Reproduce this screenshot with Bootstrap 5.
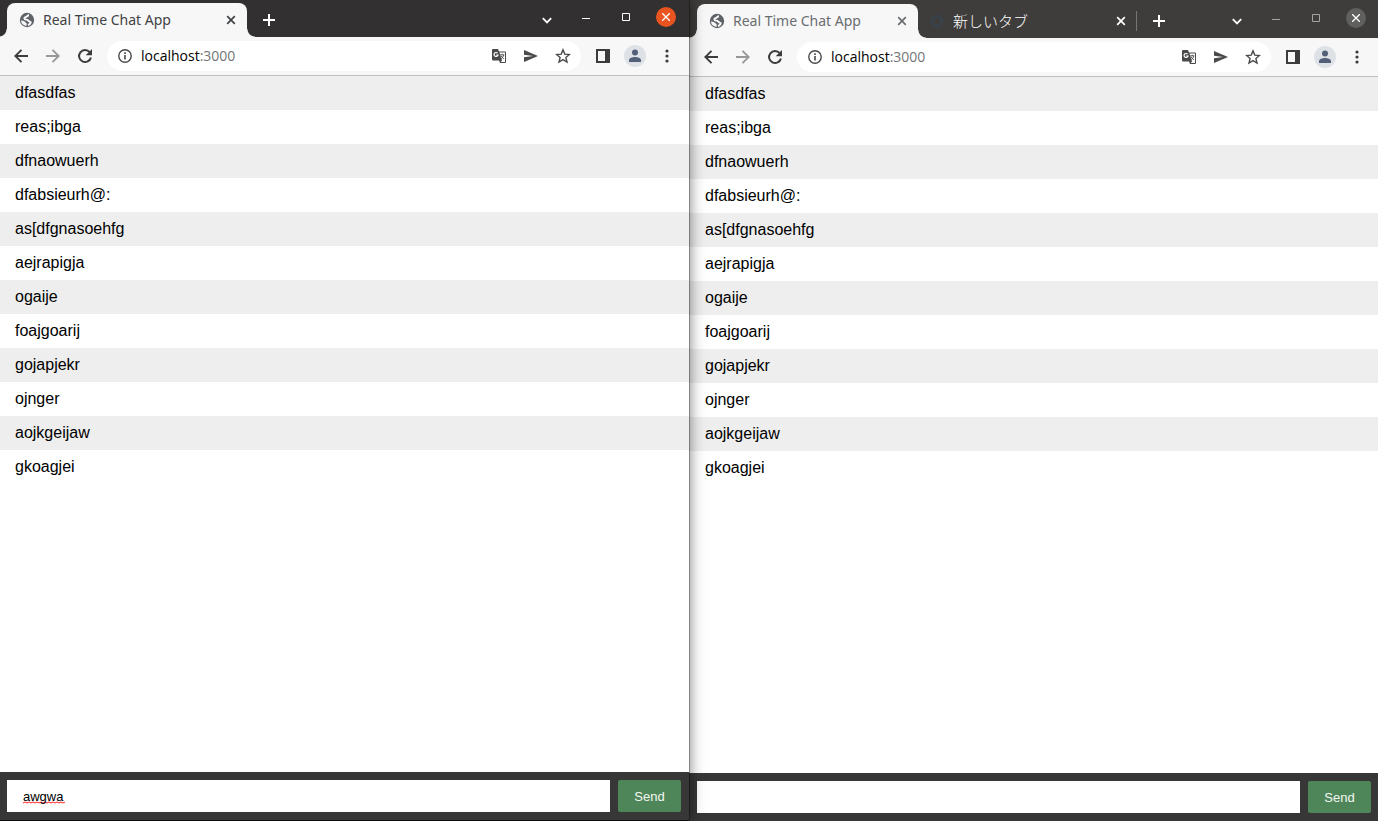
<!DOCTYPE html>
<html lang="en">
<head>
<meta charset="utf-8">
<meta name="viewport" content="width=device-width, initial-scale=1">
<title>Real Time Chat App</title>
<link href="https://cdn.jsdelivr.net/npm/bootstrap@5.3.0/dist/css/bootstrap.min.css" rel="stylesheet">
<style>
body { font-family: "Liberation Sans", Arial, sans-serif; font-size: 16px; color: #000; }
.win { flex: 1 1 0; min-width: 0; background: #fff; --start: 0px; --end: 0px; --strip: #323030; --ctl: #fff; --tabtext: #3f4245; }
.win-front { --end: 1px; z-index: 2; border-bottom: 1px solid #0c0c0c; box-shadow: 0 0 14px rgba(0,0,0,.55); }
.win-front::after { content: ""; position: absolute; top: 0; right: -1px; bottom: 0; width: 1px; background: rgba(0,0,0,.3); }
.win-back { --start: 1px; --strip: #3e3d3b; --ctl: #a5a4a2; --tabtext: #6a6d70; }
.ui { font-family: "Noto Sans", "Noto Sans CJK JP", sans-serif; }
.win button { border: 0; background: none; padding: 0; display: flex; align-items: center; justify-content: center; flex: none; color: inherit; }
.win svg { display: block; flex: none; }
.strip { background: var(--strip); padding: 3px calc(2px + var(--end)) 0 calc(7px + var(--start)); color: #fff; }
.win-back .strip { padding-top: 4px; }
.page-tab { height: 34px; width: 240px; padding-left: 12px; font-size: 14px; line-height: 20px; }
.page-tab.on { background: #f7f7f7; color: var(--tabtext); border-radius: 8px 8px 0 0; }
.page-tab.on::before, .page-tab.on::after { content: ""; position: absolute; bottom: 0; width: 8px; height: 8px; }
.page-tab.on::before { left: -8px; background: radial-gradient(circle at 0 0, transparent 7px, #f7f7f7 8px); }
.page-tab.on::after { right: -8px; background: radial-gradient(circle at 100% 0, transparent 7px, #f7f7f7 8px); }
.win-back .page-tab { width: 221px; }
.win-back .page-tab.off { width: 219px; padding-left: 11px; font-size: 15px; font-family: "Noto Sans CJK JP", sans-serif; font-weight: 300; color: #fff; }
.page-tab.off::after { content: ""; position: absolute; right: 0; top: 7px; width: 1px; height: 20px; background: #777674; }
.tool { width: 32px; height: 34px; }
.newtab { margin-left: 6px; }
.ctl { width: 40px; height: 28px; }
.ctls { color: var(--ctl); margin-left: 3px; }
.round { width: 20px; height: 20px; border-radius: 50%; background: #e95420; color: #fff; }
.win-back .round { background: #60605f; }
.bar { background: #f7f7f7; height: 39px; border-bottom: 1px solid #bfc0c0; padding: 0 calc(5px + var(--end)) 0 calc(5px + var(--start)); color: #3c3c3c; }
.omni { height: 30px; border-radius: 15px; background: #fff; margin: 0 6px; padding: 0 2px; color: #4a4a4a; }
.address { font-family: "Open Sans", sans-serif; font-size: 14px; line-height: 20px; color: #000; white-space: nowrap; }
.address span { color: #757575; }
.who { width: 22px; height: 22px; border-radius: 50%; background: #dee1e6; }
.messages li { padding: 5px 15px 5px calc(15px + var(--start)); line-height: 24px; }
.messages li:nth-child(odd) { background: #eee; }
.composer { background: #373737; padding: 8px calc(7px + var(--end)) 8px calc(7px + var(--start)); gap: 8px; font-size: 13px; }
.composer input { height: 32px; border: 0; border-radius: 0; padding: 0 16px; min-width: 0; background: #fff; color: #000; outline: 0; }
/* spelling squiggle under the draft word */
.composer .draft { background: #fff url("data:image/svg+xml,%3Csvg xmlns='http://www.w3.org/2000/svg' width='42' height='3'%3E%3Cpath d='M0 2l2-1 2 1 2-1 2 1 2-1 2 1 2-1 2 1 2-1 2 1 2-1 2 1 2-1 2 1 2-1 2 1 2-1 2 1 2-1 2 1 2-1' fill='none' stroke='%23f22' stroke-width='1'/%3E%3C/svg%3E") 16px 21px no-repeat; }
.win .composer .send { width: 63px; height: 32px; border-radius: 2px; padding-top: 1px; background: #4f8659; color: #f2f7f3; }
</style>
</head>
<body>
<svg class="d-none" aria-hidden="true">
  <symbol id="globe" viewBox="0 0 16 16"><circle cx="8" cy="8" r="7.200" fill="#5f6368"/><path d="M10 3.300C8 3.300 8.500 5 6.300 5.200 4.800 5.600 5.200 7.700 7 7.600 9.500 7.300 9 9.600 11 9.700 12.500 9.700 11.500 12 9 13" fill="none" stroke="#f7f7f7" stroke-width="1.900"/><path d="M2 8.300L5.200 9.200 7.600 11.200V13.900A6 6 0 0 1 2 8.300Z" fill="#f7f7f7"/></symbol>
  <symbol id="x" viewBox="0 0 10 10"><path d="M1.200 1.200l7.600 7.600M8.800 1.200L1.200 8.800" stroke="currentColor" stroke-width="1.700"/></symbol>
  <symbol id="plus" viewBox="0 0 12 12"><path d="M6 0v12M0 6h12" stroke="currentColor" stroke-width="2"/></symbol>
  <symbol id="chev" viewBox="0 0 10 7"><path d="M.8 1.200L5 5.400l4.200-4.200" fill="none" stroke="#fff" stroke-width="1.800"/></symbol>
  <symbol id="back" viewBox="0 0 14 14"><path d="M14 7H1.600M7.500.8L1.300 7l6.200 6.200" fill="none" stroke="currentColor" stroke-width="1.900"/></symbol>
  <symbol id="reload" viewBox="0 0 16 16"><path d="M12.700 4.200A6 6 0 1 0 13.900 9.400" fill="none" stroke="currentColor" stroke-width="2"/><path d="M15 1v6.300H8.700Z" fill="currentColor"/></symbol>
  <symbol id="info" viewBox="0 0 14 14"><circle cx="7" cy="7" r="6.200" fill="none" stroke="currentColor" stroke-width="1.400"/><path d="M7 6v4.600M7 3.300v1.600" stroke="currentColor" stroke-width="1.600"/></symbol>
  <symbol id="translate" viewBox="0 0 14 14"><path d="M1 0h5l1 2.500h6a1 1 0 0 1 1 1V13a1 1 0 0 1-1 1H8l-1-2.500H1a1 1 0 0 1-1-1V1a1 1 0 0 1 1-1Z" fill="currentColor"/><path d="M7.500 3.500H13V13H8.700L10 11.500Z" fill="#fff"/><path d="M5.600 4.200A2 2 0 1 0 6 6H4.200" fill="none" stroke="#fff" stroke-width="1.200"/><path d="M8.200 5.800h4.200M10.300 4.800v1M11.700 6c-.3 1.700-1.200 2.800-2.400 3.700M9 6.700c.6 1.300 1.500 2.300 2.900 3.200" fill="none" stroke="currentColor" stroke-width=".9"/></symbol>
  <symbol id="plane" viewBox="0 0 14 12"><path d="M0 0l14 6L0 12V7.300L9 6 0 4.700Z" fill="currentColor"/></symbol>
  <symbol id="star" viewBox="0 0 16 16"><path d="M8 1.900l1.800 4.200 4.600.4-3.500 3 1.100 4.500-4-2.400L4 14l1.100-4.500-3.500-3 4.600-.4Z" fill="none" stroke="currentColor" stroke-width="1.400"/></symbol>
  <symbol id="side" viewBox="0 0 14 14"><path d="M0 0h14v14H0ZM2 2v10h7V2Z" fill="currentColor" fill-rule="evenodd"/></symbol>
  <symbol id="person" viewBox="0 0 12 14"><circle cx="6" cy="3.500" r="3" fill="#535f79"/><path d="M0 13v-1.700C0 9 3.500 8 6 8s6 1 6 3.300V13Z" fill="#535f79"/></symbol>
  <symbol id="dots" viewBox="0 0 4 14"><g fill="currentColor"><circle cx="2" cy="2" r="1.600"/><circle cx="2" cy="7" r="1.600"/><circle cx="2" cy="12" r="1.600"/></g></symbol>
</svg>

<div class="d-flex vh-100 overflow-hidden">
  <section class="win win-front position-relative d-flex flex-column">
    <header class="ui">
      <div class="strip d-flex align-items-start">
        <div class="page-tab on position-relative d-flex align-items-center">
          <svg width="16" height="16"><use href="#globe"/></svg><span class="ms-2 me-auto">Real Time Chat App</span>
          <button class="tool" aria-label="Close tab"><svg width="10" height="10"><use href="#x"/></svg></button>
        </div>
        <button class="tool newtab me-auto" aria-label="New tab"><svg width="12" height="12"><use href="#plus"/></svg></button>
        <button class="tool" aria-label="Search tabs"><svg width="10" height="7"><use href="#chev"/></svg></button>
        <div class="ctls d-flex">
          <button class="ctl" aria-label="Minimize"><svg width="8" height="8"><path d="M0 5.500h8" stroke="currentColor"/></svg></button>
          <button class="ctl" aria-label="Maximize"><svg width="8" height="8"><path d="M.5.5h7v7h-7Z" fill="none" stroke="currentColor"/></svg></button>
          <button class="ctl" aria-label="Close"><span class="round d-flex align-items-center justify-content-center"><svg width="8" height="8"><path d="M0 0l8 8M8 0L0 8" stroke="currentColor" stroke-width="1.300"/></svg></span></button>
        </div>
      </div>
      <div class="bar d-flex align-items-center">
        <button class="tool" aria-label="Back"><svg width="14" height="14"><use href="#back"/></svg></button>
        <button class="tool opacity-50" aria-label="Forward"><svg width="14" height="14" viewBox="0 0 14 14"><path d="M0 7h12.400M6.500.8L12.700 7l-6.200 6.200" fill="none" stroke="currentColor" stroke-width="1.900"/></svg></button>
        <button class="tool" aria-label="Reload"><svg width="16" height="16"><use href="#reload"/></svg></button>
        <div class="omni d-flex flex-fill align-items-center">
          <button class="tool" aria-label="Site information"><svg width="14" height="14"><use href="#info"/></svg></button>
          <div class="address me-auto">localhost<span>:3000</span></div>
          <button class="tool" aria-label="Translate"><svg width="14" height="14"><use href="#translate"/></svg></button>
          <button class="tool" aria-label="Share"><svg width="14" height="12"><use href="#plane"/></svg></button>
          <button class="tool" aria-label="Bookmark"><svg width="16" height="16"><use href="#star"/></svg></button>
        </div>
        <button class="tool" aria-label="Side panel"><svg width="14" height="14"><use href="#side"/></svg></button>
        <button class="tool" aria-label="Profile"><span class="who d-flex align-items-center justify-content-center"><svg width="12" height="14"><use href="#person"/></svg></span></button>
        <button class="tool" aria-label="Menu"><svg width="4" height="14"><use href="#dots"/></svg></button>
      </div>
    </header>
    <ul class="messages list-unstyled mb-0 flex-fill overflow-auto">
      <li>dfasdfas</li><li>reas;ibga</li><li>dfnaowuerh</li><li>dfabsieurh@:</li><li>as[dfgnasoehfg</li><li>aejrapigja</li><li>ogaije</li><li>foajgoarij</li><li>gojapjekr</li><li>ojnger</li><li>aojkgeijaw</li><li>gkoagjei</li>
    </ul>
    <form class="composer d-flex">
      <input class="draft flex-fill" type="text" value="awgwa" aria-label="Message" autocomplete="off">
      <button class="send" type="button">Send</button>
    </form>
  </section>

  <section class="win win-back position-relative d-flex flex-column">
    <header class="ui">
      <div class="strip d-flex align-items-start">
        <div class="page-tab on position-relative d-flex align-items-center">
          <svg width="16" height="16"><use href="#globe"/></svg><span class="ms-2 me-auto">Real Time Chat App</span>
          <button class="tool" aria-label="Close tab"><svg width="10" height="10"><use href="#x"/></svg></button>
        </div>
        <div class="page-tab off position-relative d-flex align-items-center">
          <svg width="16" height="16"><circle cx="8" cy="8" r="5" fill="none" stroke="#39414a" stroke-width="3"/></svg><span class="ms-2 me-auto" lang="ja">新しいタブ</span>
          <button class="tool" aria-label="Close tab"><svg width="10" height="10"><use href="#x"/></svg></button>
        </div>
        <button class="tool newtab me-auto" aria-label="New tab"><svg width="12" height="12"><use href="#plus"/></svg></button>
        <button class="tool" aria-label="Search tabs"><svg width="10" height="7"><use href="#chev"/></svg></button>
        <div class="ctls d-flex">
          <button class="ctl" aria-label="Minimize"><svg width="8" height="8"><path d="M0 5.500h8" stroke="currentColor"/></svg></button>
          <button class="ctl" aria-label="Maximize"><svg width="8" height="8"><path d="M.5.5h7v7h-7Z" fill="none" stroke="currentColor"/></svg></button>
          <button class="ctl" aria-label="Close"><span class="round d-flex align-items-center justify-content-center"><svg width="8" height="8"><path d="M0 0l8 8M8 0L0 8" stroke="currentColor" stroke-width="1.300"/></svg></span></button>
        </div>
      </div>
      <div class="bar d-flex align-items-center">
        <button class="tool" aria-label="Back"><svg width="14" height="14"><use href="#back"/></svg></button>
        <button class="tool opacity-50" aria-label="Forward"><svg width="14" height="14" viewBox="0 0 14 14"><path d="M0 7h12.400M6.500.8L12.700 7l-6.200 6.200" fill="none" stroke="currentColor" stroke-width="1.900"/></svg></button>
        <button class="tool" aria-label="Reload"><svg width="16" height="16"><use href="#reload"/></svg></button>
        <div class="omni d-flex flex-fill align-items-center">
          <button class="tool" aria-label="Site information"><svg width="14" height="14"><use href="#info"/></svg></button>
          <div class="address me-auto">localhost<span>:3000</span></div>
          <button class="tool" aria-label="Translate"><svg width="14" height="14"><use href="#translate"/></svg></button>
          <button class="tool" aria-label="Share"><svg width="14" height="12"><use href="#plane"/></svg></button>
          <button class="tool" aria-label="Bookmark"><svg width="16" height="16"><use href="#star"/></svg></button>
        </div>
        <button class="tool" aria-label="Side panel"><svg width="14" height="14"><use href="#side"/></svg></button>
        <button class="tool" aria-label="Profile"><span class="who d-flex align-items-center justify-content-center"><svg width="12" height="14"><use href="#person"/></svg></span></button>
        <button class="tool" aria-label="Menu"><svg width="4" height="14"><use href="#dots"/></svg></button>
      </div>
    </header>
    <ul class="messages list-unstyled mb-0 flex-fill overflow-auto">
      <li>dfasdfas</li><li>reas;ibga</li><li>dfnaowuerh</li><li>dfabsieurh@:</li><li>as[dfgnasoehfg</li><li>aejrapigja</li><li>ogaije</li><li>foajgoarij</li><li>gojapjekr</li><li>ojnger</li><li>aojkgeijaw</li><li>gkoagjei</li>
    </ul>
    <form class="composer d-flex">
      <input class="flex-fill" type="text" aria-label="Message" autocomplete="off">
      <button class="send" type="button">Send</button>
    </form>
  </section>
</div>
<script src="https://cdn.jsdelivr.net/npm/bootstrap@5.3.0/dist/js/bootstrap.bundle.min.js"></script>
</body>
</html>
